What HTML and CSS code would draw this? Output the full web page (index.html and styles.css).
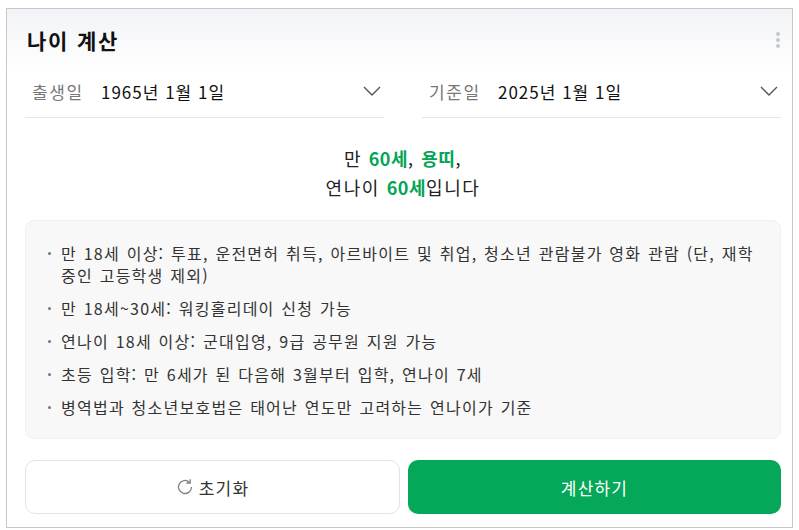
FILE: index.html
```html
<!DOCTYPE html>
<html lang="ko">
<head>
<meta charset="utf-8">
<link rel="stylesheet" href="styles.css">
</head>
<body>
<div class="card">
  <div class="header">
    <h1 class="title">나이 계산</h1>
    <span class="kebab"><i></i><i></i><i></i></span>
  </div>
  <div class="body">
    <div class="selects">
      <div class="select">
        <span class="label">출생일</span>
        <span class="value">1965년 1월 1일</span>
        <svg class="chev" width="18" height="10" viewBox="0 0 18 10"><path d="M1 1l8 8 8-8" fill="none" stroke="#555" stroke-width="1.4"/></svg>
      </div>
      <div class="select">
        <span class="label">기준일</span>
        <span class="value">2025년 1월 1일</span>
        <svg class="chev" width="18" height="10" viewBox="0 0 18 10"><path d="M1 1l8 8 8-8" fill="none" stroke="#555" stroke-width="1.4"/></svg>
      </div>
    </div>
    <div class="result">
      <p>만 <b>60세</b>, <b>용띠</b>,</p>
      <p>연나이 <b>60세</b>입니다</p>
    </div>
    <ul class="info">
      <li>만 18세 이상: 투표, 운전면허 취득, 아르바이트 및 취업, 청소년 관람불가 영화 관람 (단, 재학 중인 고등학생 제외)</li>
      <li>만 18세~30세: 워킹홀리데이 신청 가능</li>
      <li>연나이 18세 이상: 군대입영, 9급 공무원 지원 가능</li>
      <li>초등 입학: 만 6세가 된 다음해 3월부터 입학, 연나이 7세</li>
      <li>병역법과 청소년보호법은 태어난 연도만 고려하는 연나이가 기준</li>
    </ul>
    <div class="buttons">
      <button class="btn reset"><svg class="ico" width="18" height="18" viewBox="0 0 18 18"><path d="M15.5 9A6.5 6.5 0 1 1 13.4 4.2" fill="none" stroke="#808080" stroke-width="1.3"/><path d="M14.2 1.2v3.8H10.4" fill="none" stroke="#808080" stroke-width="1.3"/></svg>초기화</button>
      <button class="btn calc">계산하기</button>
    </div>
  </div>
</div>
</body>
</html>
```
FILE: styles.css
```css
* { box-sizing: border-box; }
body {
  margin: 0;
  background: #fff;
  font-family: "Noto Sans CJK KR", "Noto Sans", sans-serif;
  color: #222;
}
.card {
  margin: 8px 0 0 6px;
  width: 787px;
  height: 520px;
  border: 1px solid #c8c8c8;
  background: #fff;
}
.header {
  height: 62px;
  display: flex;
  align-items: center;
  justify-content: space-between;
  padding: 0 12px 0 20px;
  background: linear-gradient(#f2f3f6, #ffffff);
}
.title {
  margin: 0;
  font-size: 21px;
  font-weight: 700;
  color: #111;
  letter-spacing: 1.8px;
}
.kebab {
  display: flex;
  flex-direction: column;
  gap: 2px;
}
.kebab i {
  width: 4px;
  height: 4px;
  border-radius: 50%;
  background: #c4c8d2;
}
.body {
  padding: 0 11px 0 18px;
}
.selects {
  display: flex;
  gap: 38px;
}
.select {
  flex: 1;
  height: 47px;
  display: flex;
  align-items: center;
  border-bottom: 1px solid #e6e6e6;
  padding: 0 3px 6px 7px;
  font-size: 17px;
}
.label {
  color: #777;
  width: 69px;
  letter-spacing: 1.6px;
}
.value {
  color: #111;
  flex: 1;
  letter-spacing: 1px;
}
.result {
  text-align: center;
  font-size: 18px;
  line-height: 29px;
  padding: 26px 0 18px;
  color: #222;
  letter-spacing: 1.6px;
}
.result p { margin: 0; }
.result b { color: #03a556; font-weight: 700; letter-spacing: 0.5px; }
.info {
  margin: 0;
  list-style: none;
  background: #f8f8f8;
  border: 1px solid #f0f0f0;
  border-radius: 9px;
  padding: 21px 14px 20px 21px;
  font-size: 16px;
  line-height: 22px;
  letter-spacing: 1.25px;
  word-spacing: 1px;
  color: #333;
  word-break: keep-all;
}
.info li {
  position: relative;
  padding-left: 14px;
  margin-bottom: 11px;
}
.info li:last-child { margin-bottom: 0; }
.info li::before {
  content: "";
  position: absolute;
  left: 1px;
  top: 10px;
  width: 3px;
  height: 3px;
  background: #777;
  border-radius: 50%;
}
.buttons {
  display: flex;
  gap: 8px;
  margin-top: 21px;
}
.btn {
  flex: 1;
  height: 54px;
  border-radius: 10px;
  font-family: inherit;
  font-size: 17px;
  letter-spacing: 1.2px;
  display: flex;
  align-items: center;
  justify-content: center;
  gap: 5px;
}
.reset {
  background: #fff;
  border: 1px solid #e3e3e3;
  color: #333;
}
.calc {
  background: #05a859;
  border: none;
  color: #fff;
}
```
